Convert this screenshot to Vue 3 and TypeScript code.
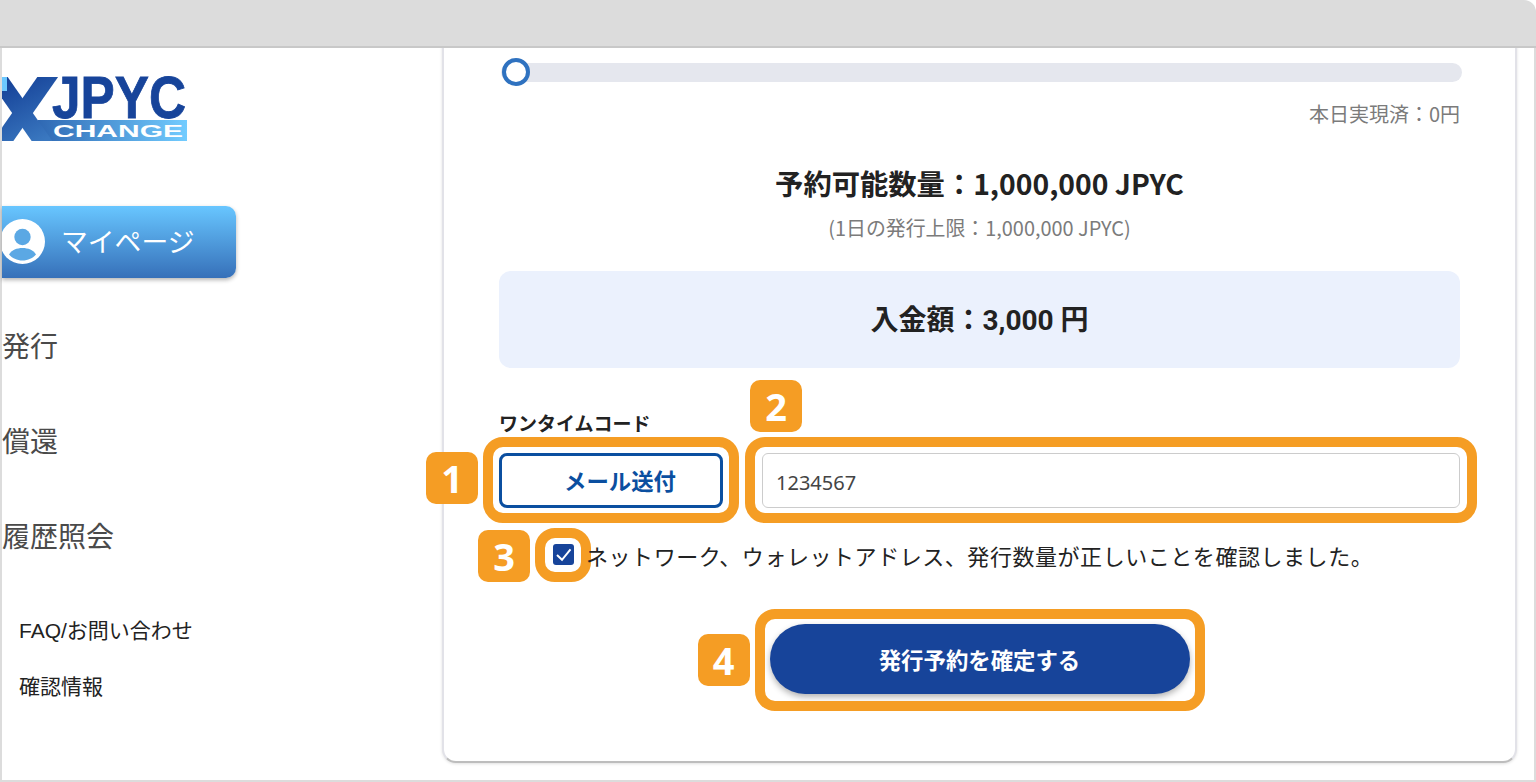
<script setup lang="ts">
const navItems = ['発行', '償還', '履歴照会']
const subItems = ['FAQ/お問い合わせ', '確認情報']
</script>

<template>
  <div class="page">
    <div class="topbar"></div>
    <div class="frame">
      <aside class="sidebar">
        <svg class="logo" width="185" height="78" viewBox="0 -14 185 78">
          <defs>
            <linearGradient id="band" x1="0" x2="1" y1="0" y2="0">
              <stop offset="0" stop-color="#2f68b3" />
              <stop offset="1" stop-color="#72ccff" />
            </linearGradient>
            <linearGradient id="cross" gradientUnits="userSpaceOnUse" x1="10" y1="5" x2="40" y2="64">
              <stop offset="0" stop-color="#17449a" />
              <stop offset="1" stop-color="#3a78c0" />
            </linearGradient>
            <clipPath id="logo-box">
              <rect x="0" y="0" width="185" height="64" />
            </clipPath>
          </defs>
          <g clip-path="url(#logo-box)">
            <rect x="36" y="43" width="149" height="21" fill="url(#band)" />
            <line x1="52" y1="-9" x2="-6" y2="74" stroke="url(#cross)" stroke-width="17" />
            <line x1="-11" y1="-9" x2="47" y2="74" stroke="url(#cross)" stroke-width="17" />
            <rect x="0" y="0" width="5" height="14" fill="#6cc8ff" />
          </g>
          <text class="logo-main" x="50" y="41" textLength="134" lengthAdjust="spacingAndGlyphs">JPYC</text>
          <text class="logo-sub" x="51" y="60" textLength="130" lengthAdjust="spacingAndGlyphs">CHANGE</text>
        </svg>

        <button class="mypage">
          <svg class="mypage-icon" width="45" height="45" viewBox="0 0 45 45">
            <circle cx="22.5" cy="22.5" r="22.5" fill="#fff" />
            <circle cx="22.5" cy="18" r="8.2" fill="#5ba8e4" />
            <path d="M9 35.500c2.500-4.500 8-6.500 13.500-6.500s11 2 13.500 6.500c-3 3.500-8 6-13.500 6s-10.500-2.500-13.500-6z" fill="#5ba8e4" />
          </svg>
          <span class="mypage-label">マイページ</span>
        </button>

        <nav class="nav">
          <a v-for="item in navItems" :key="item" class="nav-item">{{ item }}</a>
        </nav>
        <div class="subnav">
          <a v-for="item in subItems" :key="item" class="sub-item">{{ item }}</a>
        </div>
      </aside>

      <main class="main">
        <section class="card">
          <div class="slider">
            <span class="thumb"></span>
          </div>
          <p class="realized">本日実現済：0円</p>
          <h2 class="available">予約可能数量：1,000,000 JPYC</h2>
          <p class="limit">(1日の発行上限：1,000,000 JPYC)</p>
          <div class="deposit">入金額：3,000 円</div>

          <label class="otp-label">ワンタイムコード</label>
          <div class="otp-row">
            <div class="mark-wrap">
              <button class="send-btn">メール送付</button>
              <span class="ring ring-send"></span>
              <span class="badge badge-1">1</span>
            </div>
            <div class="mark-wrap grow">
              <input class="otp-input" type="text" value="1234567" readonly />
              <span class="ring ring-input"></span>
              <span class="badge badge-2">2</span>
            </div>
          </div>

          <div class="confirm-row">
            <div class="mark-wrap">
              <span class="checkbox">
                <svg width="21" height="21" viewBox="0 0 21 21">
                  <path d="M4 11l5 4.800 8.500-10.500" fill="none" stroke="#fff" stroke-width="2" />
                </svg>
              </span>
              <span class="ring ring-check"></span>
              <span class="badge badge-3">3</span>
            </div>
            <span class="confirm-text">ネットワーク、ウォレットアドレス、発行数量が正しいことを確認しました。</span>
          </div>

          <div class="mark-wrap submit-wrap">
            <button class="submit-btn">発行予約を確定する</button>
            <span class="ring ring-submit"></span>
            <span class="badge badge-4">4</span>
          </div>
        </section>
      </main>
    </div>
  </div>
</template>

<style scoped>
.page {
  width: 1536px;
  height: 782px;
  overflow: hidden;
  background: #fff;
  font-family: "Noto Sans CJK JP", sans-serif;
  color: #222;
}

.topbar {
  position: relative;
  z-index: 1;
  height: 46px;
  background: #dcdcdc;
  border-bottom: 2px solid #c8c8c8;
  border-top-right-radius: 12px;
}

.frame {
  display: flex;
  height: 734px;
  box-sizing: border-box;
  border-left: 2px solid #dcdcdc;
  border-right: 2px solid #dcdcdc;
  border-bottom: 2px solid #dcdcdc;
}

.sidebar {
  width: 440px;
  flex-shrink: 0;
  padding-top: 15px;
  box-sizing: border-box;
  font-family: "Liberation Sans", "Noto Sans CJK JP", sans-serif;
}

.logo {
  display: block;
}

.logo-main {
  font: 700 60px "Liberation Sans", sans-serif;
  fill: #17449a;
  stroke: #17449a;
  stroke-width: 0.8px;
}

.logo-sub {
  font: 700 17px "Liberation Sans", sans-serif;
  fill: #fff;
}

.mypage {
  display: flex;
  align-items: center;
  gap: 16px;
  width: 234px;
  height: 72px;
  margin-top: 65px;
  padding: 0;
  overflow: hidden;
  border: none;
  border-radius: 0 10px 10px 0;
  background: linear-gradient(#68c6ff, #3670b9);
  box-shadow: 0 2px 4px rgba(0, 0, 0, 0.3);
  color: #fff;
  font: 400 26.8px "Noto Sans CJK JP", sans-serif;
}

.mypage-icon {
  flex-shrink: 0;
  margin: 0 0 1px -2px;
}

.mypage-label {
  margin-bottom: 4px;
}

.nav {
  display: flex;
  flex-direction: column;
  margin-top: 22px;
}

.nav-item {
  height: 95px;
  line-height: 95px;
  font-size: 28px;
  color: #4a4a4a;
}

.subnav {
  display: flex;
  flex-direction: column;
  gap: 22px;
  margin-top: 29px;
  padding-left: 17px;
}

.sub-item {
  line-height: 34px;
  font-size: 21px;
  color: #222;
}

.main {
  flex: 1;
  min-width: 0;
  padding-right: 17px;
  box-sizing: border-box;
}

.card {
  display: flex;
  flex-direction: column;
  height: 737px;
  margin-top: -22px;
  padding: 35px 55px 0;
  box-sizing: border-box;
  background: #fff;
  border: 2px solid #e2e2e8;
  border-bottom-color: #bdbdbd;
  border-radius: 14px;
  box-shadow: 0 1px 3px rgba(0, 0, 0, 0.12);
}

.slider {
  position: relative;
  height: 19px;
  margin: 0 -2px 0 2px;
  border-radius: 10px;
  background: #e5e7ee;
}

.thumb {
  position: absolute;
  left: 1px;
  top: -5px;
  width: 28px;
  height: 28px;
  box-sizing: border-box;
  border: 4px solid #2f72c0;
  border-radius: 50%;
  background: #fff;
}

.realized {
  margin: 19px 0 0;
  line-height: 26px;
  text-align: right;
  font-size: 20px;
  color: #7b7b7b;
}

.available {
  margin: 37px 0 0;
  line-height: 38px;
  text-align: center;
  font-size: 28.3px;
  font-weight: 700;
  color: #222;
}

.limit {
  margin: 12px 0 0;
  line-height: 28px;
  text-align: center;
  font-size: 19.9px;
  color: #7b7b7b;
}

.deposit {
  display: flex;
  align-items: center;
  justify-content: center;
  height: 97px;
  margin-top: 29px;
  padding-bottom: 3px;
  box-sizing: border-box;
  border-radius: 12px;
  background: #ebf1fd;
  font-family: Roboto, "Noto Sans CJK JP", sans-serif;
  font-size: 28px;
  font-weight: 700;
}

.otp-label {
  margin-top: 41px;
  line-height: 28px;
  font-size: 19px;
  font-weight: 700;
}

.otp-row {
  display: flex;
  gap: 39px;
  margin-top: 16px;
}

.mark-wrap {
  position: relative;
}

.grow {
  flex: 1;
}

.send-btn {
  display: block;
  width: 224px;
  height: 55px;
  padding: 0 0 2px 18px;
  box-sizing: border-box;
  border: 3px solid #0b4fa0;
  border-radius: 8px;
  background: #fff;
  color: #0b4fa0;
  font: 700 22.4px "Noto Sans CJK JP", sans-serif;
}

.otp-input {
  display: block;
  width: 100%;
  height: 55px;
  box-sizing: border-box;
  padding: 4px 13px 0;
  border: 1px solid #ccc;
  border-radius: 6px;
  outline: none;
  color: #444;
  font: 400 20px "Noto Sans", sans-serif;
}

.confirm-row {
  display: flex;
  align-items: center;
  gap: 12px;
  height: 25px;
  margin-top: 34px;
  margin-left: 54px;
}

.checkbox {
  display: block;
  width: 21px;
  height: 21px;
  border-radius: 3px;
  background: #17449a;
}

.checkbox svg {
  display: block;
}

.confirm-text {
  position: relative;
  top: 1px;
  font-size: 22px;
  line-height: 25px;
  letter-spacing: 0.55px;
  color: #222;
  white-space: nowrap;
}

.submit-wrap {
  align-self: center;
  margin-top: 57px;
}

.submit-btn {
  display: block;
  width: 420px;
  height: 70px;
  border: none;
  border-radius: 35px;
  background: #17449a;
  box-shadow: 0 3px 6px rgba(0, 0, 0, 0.3);
  color: #fff;
  font: 700 22.4px "Noto Sans CJK JP", sans-serif;
}

.ring {
  position: absolute;
  box-sizing: border-box;
  border: 10px solid #f59d24;
  border-radius: 20px;
  pointer-events: none;
}

.ring-send {
  inset: -16px -16px -15px -16px;
}

.ring-input {
  inset: -16px -17px -15px -17px;
}

.ring-check {
  inset: -16px -17px -17px -18px;
}

.ring-submit {
  inset: -15px -15px -17px -15px;
}

.badge {
  position: absolute;
  display: flex;
  align-items: center;
  justify-content: center;
  width: 52px;
  height: 52px;
  border-radius: 10px;
  background: #f59d24;
  color: #fff;
  font: 700 38px "Noto Sans", sans-serif;
}

.badge-1 {
  left: -73px;
  top: -1px;
}

.badge-2 {
  left: -12px;
  top: -73px;
}

.badge-3 {
  left: -75px;
  top: -14px;
}

.badge-4 {
  left: -72px;
  top: 10px;
}
</style>
